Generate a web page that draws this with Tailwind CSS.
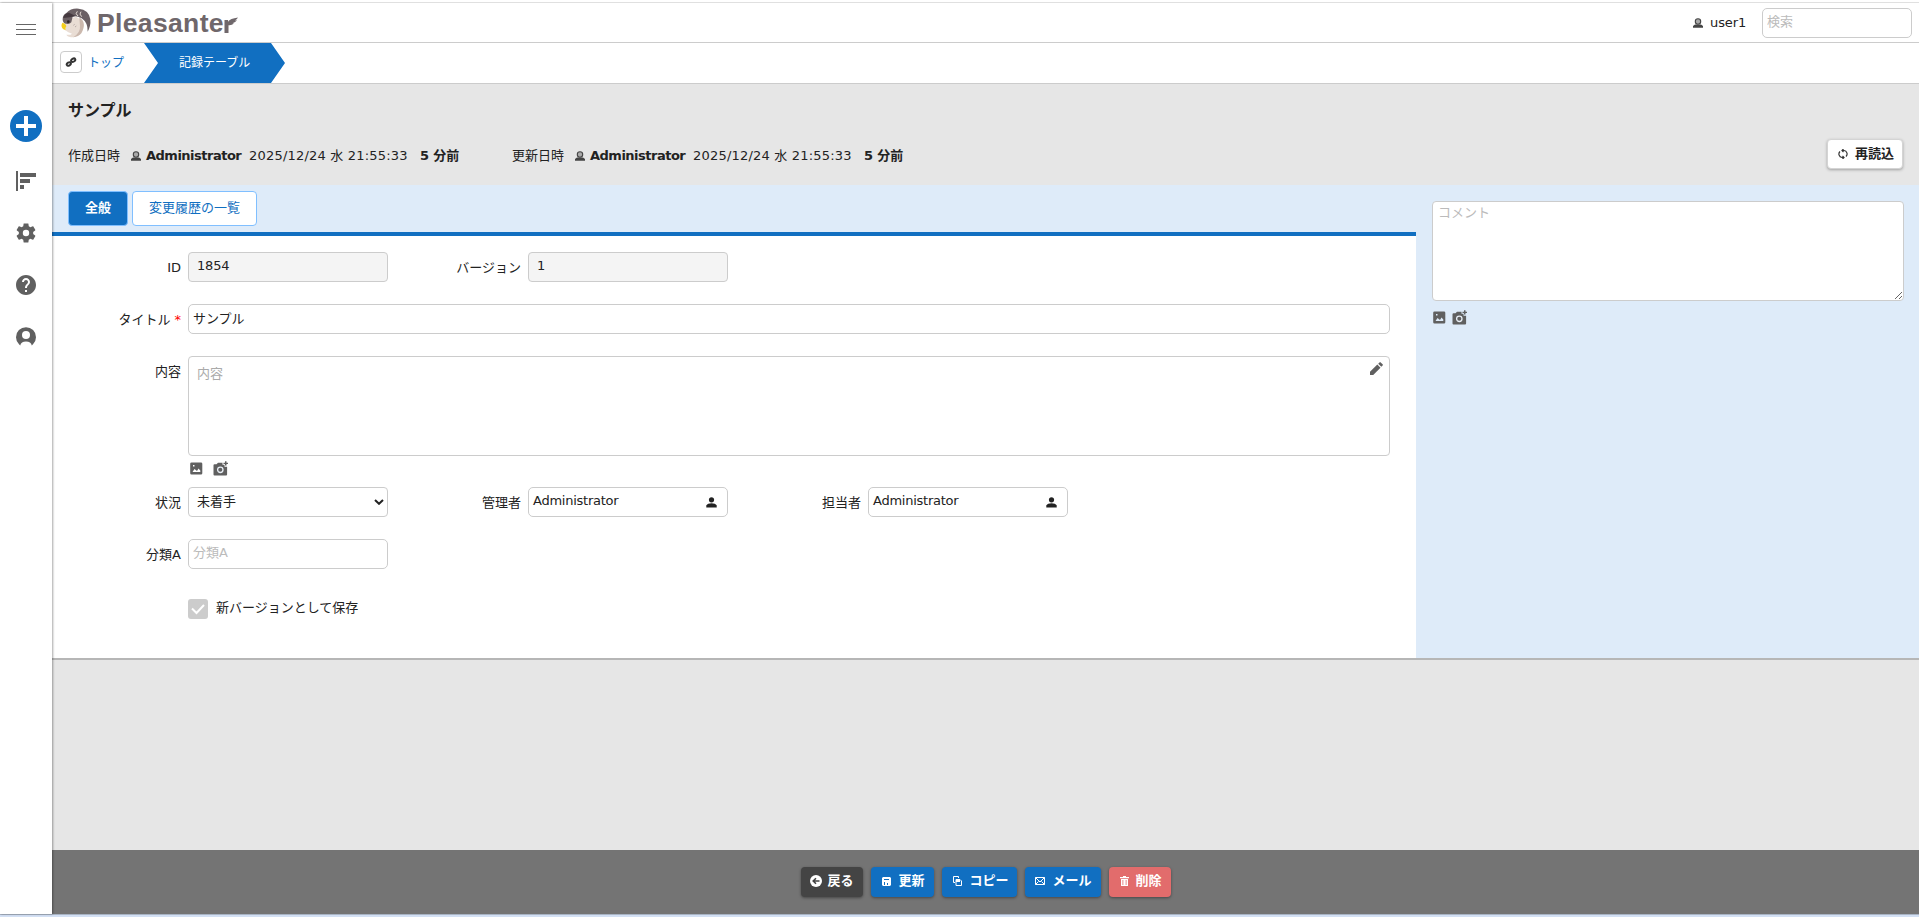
<!DOCTYPE html>
<html lang="ja">

<head>
    <meta charset="UTF-8">
    <meta name="viewport" content="width=device-width, initial-scale=1.0">
    <title>サンプル - Pleasanter</title>
    <script src="https://cdn.jsdelivr.net/npm/@tailwindcss/browser@4"></script>
</head>

<body class="flex h-screen flex-col overflow-hidden bg-white font-['DejaVu_Sans','Noto_Sans_CJK_JP',sans-serif] text-[13px] leading-5 text-[#222]">
<!-- Shared icons -->
<svg class="hidden">
    <symbol id="icon-image" viewBox="0 0 13 13">
        <path fill="#606060" fill-rule="evenodd" d="M1.5 0.5h9.5a1.3 1.3 0 0 1 1.3 1.3v9.4a1.3 1.3 0 0 1-1.3 1.3H1.5a1.3 1.3 0 0 1-1.3-1.3V1.8A1.3 1.3 0 0 1 1.5 .5zM3 3v1.5h1.5V3zM2.5 10h7.8V8.5L8.5 6.5 7 9 4.5 7z"/>
    </symbol>
    <symbol id="icon-camera" viewBox="0 0 15 15">
        <path fill="#606060" d="M.5 4.2a1 1 0 0 1 1-1h2L5 1.8h4.5v2h2v2h2.6v7.7a1 1 0 0 1-1 1H1.5a1 1 0 0 1-1-1zM12 .2h1.5v1.5H15V3h-1.500v1.500H12V3h-1.500V1.700H12z"/>
        <circle cx="7.3" cy="8.800" r="2.700" fill="none" stroke="#e8eef5" stroke-width="1.300"/>
    </symbol>
    <symbol id="icon-user" viewBox="0 0 10 10">
        <circle cx="5" cy="3.500" r="2.700" fill="#aaa" stroke="#444" stroke-width="1.100"/>
        <path fill="#444" d="M0 9.800V8l2-1.500h6L10 8v1.800z"/>
    </symbol>
    <symbol id="icon-person" viewBox="0 0 11 11">
        <circle cx="5.500" cy="2.800" r="2.600" fill="#222"/>
        <path fill="#222" d="M.3 10.500V8.300Q1.500 6.400 5.500 6.300 9.500 6.400 10.700 8.300v2.200z"/>
    </symbol>
</svg>

<div class="h-[3px] shrink-0 border-b border-[#e0e0e0]"></div>

<div class="flex min-h-0 flex-1">
    <!-- Side menu -->
    <nav class="z-10 flex w-[52px] shrink-0 flex-col items-center bg-white shadow-[1px_0_2px_rgba(0,0,0,0.35)]">
        <svg class="mt-5 h-3 w-5" viewBox="0 0 20 12"><path fill="#666" d="M0 1h20v1H0zM0 6h20v1H0zM0 11h20v1H0z"/></svg>
        <svg class="mt-[75px] h-8 w-8" viewBox="0 0 32 32"><circle cx="16" cy="16" r="16" fill="#116fc1"/><path fill="#fff" d="M14 6h4v8h8v4h-8v8h-4v-8H6v-4h8z"/></svg>
        <svg class="mt-[29px] h-5 w-5" viewBox="0 0 20 20"><path fill="#606060" d="M0 0h2v20H0zM4 2h16v4H4zM4 8h10v4H4zM4 14h4v4H4z"/></svg>
        <svg class="mt-[30px] h-6 w-6" viewBox="0 0 24 24"><path fill="#606060" d="M19.140 12.940c.04-.3.060-.61.060-.94 0-.32-.020-.64-.070-.94l2.030-1.580c.18-.14.230-.41.120-.61l-1.920-3.320c-.12-.22-.37-.29-.59-.22l-2.390.96c-.5-.38-1.030-.7-1.620-.94l-.36-2.540c-.04-.24-.24-.41-.48-.41h-3.840c-.24 0-.43.17-.47.41l-.36 2.540c-.59.24-1.130.57-1.620.94l-2.390-.96c-.22-.08-.47 0-.59.22L2.740 8.870c-.12.21-.080.47.12.61l2.030 1.580c-.05.3-.09.63-.09.94s.020.640.070.940l-2.030 1.580c-.18.14-.23.41-.12.610l1.920 3.320c.12.22.37.29.59.22l2.390-.96c.5.38 1.030.7 1.620.94l.36 2.540c.050.24.24.41.48.41h3.840c.24 0 .44-.17.47-.41l.36-2.540c.59-.24 1.130-.56 1.620-.94l2.390.96c.22.080.47 0 .59-.22l1.920-3.320c.12-.22.070-.47-.12-.61l-2.010-1.580zM12 15.200a3.200 3.200 0 1 1 0-6.400 3.200 3.200 0 0 1 0 6.400z"/></svg>
        <svg class="mt-7 h-6 w-6" viewBox="0 0 24 24"><path fill="#606060" d="M12 2C6.480 2 2 6.480 2 12s4.480 10 10 10 10-4.480 10-10S17.520 2 12 2zm1 17h-2v-2h2v2zm2.070-7.750l-.9.920C13.450 12.900 13 13.500 13 15h-2v-.5c0-1.100.45-2.100 1.170-2.830l1.240-1.260c.37-.36.59-.86.59-1.410 0-1.100-.9-2-2-2s-2 .9-2 2H8c0-2.210 1.790-4 4-4s4 1.790 4 4c0 .88-.36 1.680-.93 2.250z"/></svg>
        <svg class="mt-7 h-6 w-6" viewBox="0 0 24 24">
            <path fill="#606060" d="M5 19.300A10 10 0 1 1 19 19.300L17.800 20.500Q17 16.500 12 16.500T6.200 20.500z"/>
            <circle cx="12" cy="10" r="4" fill="#fff"/>
        </svg>
    </nav>

    <div class="flex min-w-0 flex-1 flex-col">
        <!-- Header -->
        <header class="flex h-10 shrink-0 items-center border-b border-[#ccc] pr-[7px] pl-2">
            <svg class="h-8 w-8" viewBox="180 21 96 96">
                <path fill="#e9ddd4" d="M192 62Q215 55 228 50Q252 60 246 84Q242 104 221 112Q203 112 199 104Q212 106 216 101Q204 98 196 91z"/>
                <path fill="#cbb8ad" d="M238 52Q262 68 244 100Q236 110 220 112Q242 97 240 78z"/>
                <path fill="#6b6064" d="M188 60Q187 45 199 39Q213 24 236 26Q267 29 271 58Q273 78 263 95Q264 68 245 55Q228 46 218 50L214 67Q207 74 200 71Q190 72 188 60z"/>
                <path fill="#45393f" d="M190 52Q194 39 207 38L227 48Q211 52 190 54z"/>
                <path fill="none" stroke="#e8ded7" stroke-width="3" d="M232 34Q224 41 234 48M243 35Q236 42 245 50"/>
                <circle cx="205" cy="65" r="4" fill="#2e2528"/>
                <path fill="#f4cf1c" d="M187 68Q197 70 199 79Q194 84 197 91Q188 90 185 81Q183 75 187 68z"/>
                <path fill="none" stroke="#85777a" stroke-width="1.500" d="M220 76l4-3M225 81l4-3"/>
            </svg>
            <div class="ml-[5px] flex items-center text-[#6f676b]">
                <span class="font-['Liberation_Sans',sans-serif] text-[26.500px] leading-8 font-bold tracking-[0.350px]">Pleasante</span>
                <svg class="h-8 w-4" viewBox="0 0 16 32"><path fill="currentColor" d="M.5 13h3.600v1.800Q6 11.500 14 10.500Q13 12.500 10.800 13.500L13 13.300Q11.500 15.500 8.500 16.300L10 16.600Q7.500 18.600 4.500 18.200V26H.5z"/></svg>
            </div>
            <svg class="ml-auto h-[10px] w-[10px]"><use href="#icon-user"/></svg>
            <span class="ml-[7px] w-[52px] tracking-[-0.100px]">user1</span>
            <input type="text" placeholder="検索" class="h-[30px] w-[150px] rounded-[5px] border border-[#ccc] px-1 pb-[3px] placeholder:text-[#bbb]">
        </header>

        <!-- Breadcrumb -->
        <div class="flex h-[41px] shrink-0 items-center border-b border-[#ccc] pl-2 text-xs">
            <button class="mb-[2px] flex h-[22px] w-[22px] items-center justify-center rounded-[4px] border border-[#ccc]">
                <svg class="h-3 w-3" viewBox="0 0 12 12"><g fill="none" stroke="#333" stroke-width="2"><ellipse cx="3.800" cy="8" rx="2.200" ry="1.500" transform="rotate(-30 3.800 8)"/><ellipse cx="8.200" cy="4.200" rx="2.200" ry="1.500" transform="rotate(-30 8.200 4.200)"/></g></svg>
            </button>
            <a class="ml-[6px] w-14 text-[#116fc1]">トップ</a>
            <div class="h-10 w-[141px] bg-[#116fc1] pl-[35px] leading-[40px] text-white [clip-path:polygon(0_0,127px_0,100%_50%,127px_100%,0_100%,14px_50%)]">記録テーブル</div>
        </div>

        <!-- Record header -->
        <div class="h-[101px] shrink-0 bg-[#e6e6e6] pt-[17px] pl-4">
            <h1 class="text-base leading-5 font-bold">サンプル</h1>
            <div class="mt-5 flex h-[30px] items-center pr-4">
                <div class="flex w-[444px] items-center whitespace-nowrap">
                    <span class="w-[63px]">作成日時</span>
                    <svg class="h-[10px] w-[10px]"><use href="#icon-user"/></svg>
                    <span class="ml-[5px] w-[103px] font-bold tracking-[-0.500px]">Administrator</span>
                    <span class="w-[171px] tracking-[0.200px]">2025/12/24 水 21:55:33</span>
                    <span class="font-bold tracking-[-0.100px]">5 分前</span>
                </div>
                <div class="flex w-[444px] items-center whitespace-nowrap">
                    <span class="w-[63px]">更新日時</span>
                    <svg class="h-[10px] w-[10px]"><use href="#icon-user"/></svg>
                    <span class="ml-[5px] w-[103px] font-bold tracking-[-0.500px]">Administrator</span>
                    <span class="w-[171px] tracking-[0.200px]">2025/12/24 水 21:55:33</span>
                    <span class="font-bold tracking-[-0.100px]">5 分前</span>
                </div>
                <button class="mt-[-4px] ml-auto flex h-[30px] w-[76px] items-center gap-[7px] rounded-[4px] border border-[#d4d4d4] bg-white pl-[10px] font-bold shadow-[0_1px_3px_rgba(0,0,0,0.3)]">
                    <svg class="h-[10px] w-[10px]" viewBox="0 0 10 10"><path fill="none" stroke="#333" stroke-width="1.200" d="M6 8.500H4A3.500 3.500 0 0 1 2 2.500M4 1.500h2A3.500 3.500 0 0 1 8 7.500M5.500 0L4 1.500 5.500 3M4.500 7L6 8.500 4.500 10"/></svg>
                    再読込
                </button>
            </div>
        </div>

        <!-- Editor -->
        <div class="flex h-[475px] shrink-0 border-b-2 border-[#b6b6b6] bg-[#deebf9]">
            <div class="flex w-[1364px] shrink-0 flex-col">
                <div class="flex h-[51px] shrink-0 gap-1 border-b-4 border-[#116fc1] pt-[6px] pl-4">
                    <button class="h-[35px] w-[60px] rounded-[4px] border border-[#80bfff] bg-[#116fc1] pb-[2px] font-bold text-white">全般</button>
                    <button class="h-[35px] w-[125px] rounded-[4px] border border-[#80bfff] bg-white pb-[2px] text-[#116fc1]">変更履歴の一覧</button>
                </div>
                <div class="flex-1 bg-white pt-4">
                    <div class="flex h-[52px]">
                        <div class="flex w-[336px]">
                            <label class="w-[129px] pt-[6px] text-right">ID</label>
                            <div class="ml-[7px] h-[30px] w-[200px] rounded-[4px] border border-[#ccc] bg-[#f4f4f4] px-2 leading-[26px] tracking-[-0.200px]">1854</div>
                        </div>
                        <div class="flex w-[340px]">
                            <label class="w-[133px] pt-[6px] text-right">バージョン</label>
                            <div class="ml-[7px] h-[30px] w-[200px] rounded-[4px] border border-[#ccc] bg-[#f4f4f4] px-2 leading-[26px]">1</div>
                        </div>
                    </div>
                    <div class="flex h-[52px]">
                        <label class="w-[129px] pt-[6px] text-right">タイトル<span class="ml-[4px] text-[#f00]">*</span></label>
                        <input type="text" value="サンプル" class="ml-[7px] h-[30px] w-[1202px] rounded-[5px] border border-[#ccc] px-1 pb-[4px]">
                    </div>
                    <div class="flex h-[105px]">
                        <label class="w-[129px] pt-[6px] text-right">内容</label>
                        <div class="ml-[7px] flex h-[100px] w-[1202px] justify-between rounded-[4px] border border-[#ccc] pt-[7px] pr-[6px] pl-2 text-[#aaa]">
                            内容
                            <svg class="mt-[-2px] h-[13px] w-[13px]" viewBox="0 0 13 13"><path fill="#606060" d="M0 13v-3.200L7.300 2.500l3.200 3.200L3.200 13zM8.200 1.700L9.500.4q.6-.6 1.200 0l1.900 1.900q.6.600 0 1.200L11.300 4.800z"/></svg>
                        </div>
                    </div>
                    <div class="flex h-[26px] gap-[10px] pl-[138px]">
                        <svg class="mt-px h-[13px] w-[13px]"><use href="#icon-image"/></svg>
                        <svg class="h-[15px] w-[15px]"><use href="#icon-camera"/></svg>
                    </div>
                    <div class="flex h-[52px]">
                        <div class="flex w-[336px]">
                            <label class="w-[129px] pt-[6px] text-right">状況</label>
                            <div class="ml-[7px] flex h-[30px] w-[200px] items-center justify-between rounded-[4px] border border-[#ccc] pr-[3px] pl-2">
                                <span class="mb-px">未着手</span>
                                <svg class="h-[6px] w-[10px]" viewBox="0 0 10 6"><path fill="none" stroke="#222" stroke-width="2" d="M1 1l4 3.800L9 1"/></svg>
                            </div>
                        </div>
                        <div class="flex w-[340px]">
                            <label class="w-[133px] pt-[6px] text-right">管理者</label>
                            <div class="ml-[7px] flex h-[30px] w-[200px] items-center justify-between rounded-[5px] border border-[#ccc] pr-[10px] pl-1">
                                <span class="mb-[3px] tracking-[-0.250px]">Administrator</span>
                                <svg class="h-[11px] w-[11px]"><use href="#icon-person"/></svg>
                            </div>
                        </div>
                        <div class="flex w-[340px]">
                            <label class="w-[133px] pt-[6px] text-right">担当者</label>
                            <div class="ml-[7px] flex h-[30px] w-[200px] items-center justify-between rounded-[5px] border border-[#ccc] pr-[10px] pl-1">
                                <span class="mb-[3px] tracking-[-0.250px]">Administrator</span>
                                <svg class="h-[11px] w-[11px]"><use href="#icon-person"/></svg>
                            </div>
                        </div>
                    </div>
                    <div class="flex h-[60px]">
                        <label class="w-[129px] pt-[6px] text-right">分類A</label>
                        <input type="text" placeholder="分類A" class="ml-[7px] h-[30px] w-[200px] rounded-[5px] border border-[#ccc] px-1 pb-[3px] placeholder:text-[#bbb]">
                    </div>
                    <div class="flex h-5 items-center pl-[136px]">
                        <svg class="h-5 w-5 rounded-[3px] bg-[#ccc]" viewBox="0 0 20 20"><path fill="none" stroke="#fff" stroke-width="2" d="M4 9.500l4.500 4.500L16 6"/></svg>
                        <span class="mb-[2px] ml-2">新バージョンとして保存</span>
                    </div>
                </div>
            </div>

            <!-- Comments -->
            <div class="flex-1 pt-4 pr-[15px] pl-4">
                <textarea placeholder="コメント" class="block h-[100px] w-full resize rounded-[4px] border border-[#ccc] bg-white px-[5px] pt-[1px] placeholder:text-[#bbb]"></textarea>
                <div class="mt-[9px] flex gap-[6px] pl-[1px]">
                    <svg class="mt-[1px] h-[13px] w-[13px]"><use href="#icon-image"/></svg>
                    <svg class="h-[15px] w-[15px]"><use href="#icon-camera"/></svg>
                </div>
            </div>
        </div>

        <div class="flex-1 bg-[#e6e6e6]"></div>

        <!-- Commands -->
        <div class="flex h-16 shrink-0 items-start justify-center gap-2 bg-[#747474] pt-[17px] font-bold text-white">
            <button class="flex h-[30px] w-[62px] items-center gap-[6px] rounded-[4px] bg-[#444] pb-[2px] pl-[9px] shadow-[0_1px_3px_rgba(0,0,0,0.4)]">
                <svg class="h-3 w-3" viewBox="0 0 12 12"><circle cx="6" cy="6" r="6" fill="#fff"/><path fill="none" stroke="#444" stroke-width="1.600" d="M9.500 6H3.500M6 3.200L3.200 6 6 8.800"/></svg>
                戻る
            </button>
            <button class="flex h-[30px] w-[63px] items-center gap-2 rounded-[4px] bg-[#116fc1] pb-[2px] pl-[11px] shadow-[0_1px_3px_rgba(0,0,0,0.4)]">
                <svg class="h-[9px] w-[9px]" viewBox="0 0 9 9"><path fill="#fff" fill-rule="evenodd" d="M1 0h7l1 1v7L8 9H1L0 8V1zM2 2v1h5V2zM2 5v3h1V5zM5 6v2h1V6z"/></svg>
                更新
            </button>
            <button class="flex h-[30px] w-[75px] items-center gap-2 rounded-[4px] bg-[#116fc1] pb-[2px] pl-[11px] shadow-[0_1px_3px_rgba(0,0,0,0.4)]">
                <svg class="h-[10px] w-[9px]" viewBox="0 0 9 10"><path fill="none" stroke="#fff" d="M2 6.500H.5v-6h5V2M3 3.500h4l1.500 1.500v4.500H3z"/><path fill="#fff" d="M3 3h4v3H3z"/></svg>
                コピー
            </button>
            <button class="flex h-[30px] w-[76px] items-center gap-2 rounded-[4px] bg-[#116fc1] pb-[2px] pl-[10px] shadow-[0_1px_3px_rgba(0,0,0,0.4)]">
                <svg class="h-2 w-[10px]" viewBox="0 0 10 8"><path fill="none" stroke="#fff" d="M.5.5h9v7h-9zM.5.5L5 5 9.500.5M.5 7.500l3-3M9.500 7.500l-3-3"/></svg>
                メール
            </button>
            <button class="flex h-[30px] w-[62px] items-center gap-[7px] rounded-[4px] bg-[#e26c6c] pb-[2px] pl-[11px] shadow-[0_1px_3px_rgba(0,0,0,0.4)]">
                <svg class="h-[10px] w-[9px]" viewBox="0 0 9 10"><path fill="#fff" fill-rule="evenodd" d="M0 1h3V0h3v1h3v1.200H0zM1 3h7v7H1zM2.500 4v5h.8V4zM5.700 4v5h.8V4z"/></svg>
                削除
            </button>
        </div>
    </div>
</div>

<div class="h-[3px] shrink-0 border-t border-[#a9b4c4] bg-[#d3e0f4]"></div>
</body>

</html>
